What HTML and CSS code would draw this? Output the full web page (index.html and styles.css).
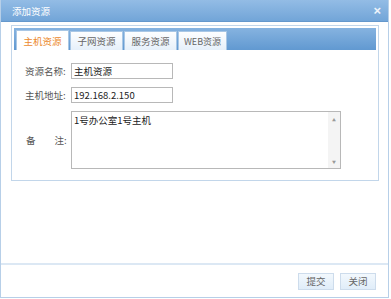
FILE: index.html
```html
<!DOCTYPE html>
<html lang="zh-CN">
<head>
    <meta charset="UTF-8">
    <title>添加资源</title>
    <link rel="stylesheet" href="styles.css">
</head>
<body>
    <div class="window">
        <div class="window-header">
            <span class="window-title">添加资源</span>
            <span class="window-close">&times;</span>
        </div>
        <div class="window-body">
            <div class="tab-box">
                <div class="tab-bar">
                    <span class="tab active">主机资源</span>
                    <span class="tab">子网资源</span>
                    <span class="tab">服务资源</span>
                    <span class="tab tab-web">WEB资源</span>
                </div>
                <form class="res-form">
                    <div class="row">
                        <label>资源名称:</label>
                        <input type="text" class="txt" value="主机资源">
                    </div>
                    <div class="row">
                        <label>主机地址:</label>
                        <input type="text" class="txt" value="192.168.2.150">
                    </div>
                    <div class="row row-note">
                        <label><span>备</span><span>注:</span></label>
                        <div class="note">
                            <div class="note-text">1号办公室1号主机</div>
                            <div class="scroll"><span>&#9650;</span><span>&#9660;</span></div>
                        </div>
                    </div>
                </form>
            </div>
        </div>
        <div class="window-footer">
            <span class="btn">提交</span>
            <span class="btn">关闭</span>
        </div>
    </div>
</body>
</html>
```

FILE: styles.css
```css
* {
    margin: 0;
    padding: 0;
    box-sizing: border-box;
}
body {
    background: #fff;
    font-family: "Noto Sans CJK SC", "Liberation Sans", sans-serif;
    font-size: 9.5px;
    color: #333;
}
.window {
    width: 389px;
    height: 298px;
    border: 1px solid #b7cfe8;
    border-top: none;
    display: flex;
    flex-direction: column;
    background: #fff;
}
.window-header {
    height: 22px;
    background: linear-gradient(to bottom, #93bce5, #72a5d8);
    border-bottom: 1px solid #6598cc;
    display: flex;
    align-items: center;
    justify-content: space-between;
    padding: 0 7px 0 11px;
}
.window-title {
    color: #fff;
    font-size: 9.5px;
}
.window-close {
    color: #eef4fb;
    font-family: "Liberation Sans", sans-serif;
    font-size: 13px;
    font-weight: bold;
    line-height: 1;
}
.window-body {
    height: 243px;
    padding: 3px 9px 0 10px;
    border-bottom: 2px solid #dce8f4;
}
.tab-box {
    border: 1px solid #c2d6ea;
    height: 156px;
    padding: 2px 2px 0 2px;
}
.tab-bar {
    height: 22px;
    background: linear-gradient(to bottom, #86b3e0, #6199d1);
    display: flex;
    align-items: flex-end;
    padding-left: 2px;
    gap: 1px;
}
.tab {
    height: 19px;
    width: 53px;
    background: linear-gradient(to bottom, #fdfeff, #e6f0fa);
    border: 1px solid #a9c7e5;
    border-bottom: none;
    color: #666;
    display: flex;
    align-items: center;
    justify-content: center;
}
.tab.active {
    width: 53px;
    height: 20px;
    background: #fff;
    color: #ec8a2e;
}
.tab-web {
    width: 49px;
    font-size: 9px;
}
.res-form {
    padding: 13px 0 0 11px;
}
.row {
    display: flex;
    align-items: center;
    margin-bottom: 8px;
}
.row label {
    width: 46px;
    color: #555;
}
.row-note label {
    display: flex;
    gap: 19px;
    padding-left: 1px;
}
.txt {
    width: 102px;
    height: 16px;
    border: 1px solid #b8b8b8;
    padding: 0 2px;
    font-family: "Noto Sans CJK SC", "Liberation Sans", sans-serif;
    font-size: 9.5px;
    color: #222;
}
.note {
    width: 270px;
    height: 58px;
    border: 1px solid #b8b8b8;
    display: flex;
    justify-content: space-between;
}
.note-text {
    padding: 1px 2px;
    color: #222;
}
.scroll {
    width: 12px;
    background: #f4f4f4;
    display: flex;
    flex-direction: column;
    justify-content: space-between;
    align-items: center;
    font-size: 4px;
    color: #999;
    padding: 5px 0 3px;
}
.window-footer {
    height: 32px;
    display: flex;
    justify-content: flex-end;
    align-items: center;
    gap: 6px;
    padding-right: 12px;
}
.btn {
    width: 36px;
    height: 17px;
    background: linear-gradient(to bottom, #f2f8fd, #e0edf9);
    border: 1px solid #cddcec;
    color: #666;
    display: flex;
    align-items: center;
    justify-content: center;
}
```
